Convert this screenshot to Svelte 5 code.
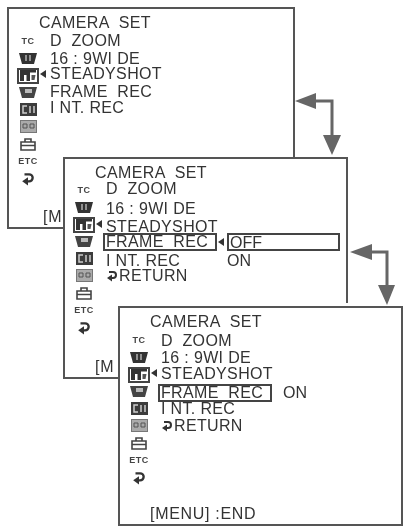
<script lang="ts">
	const panels = [
		{
			cls: 'p1',
			title: 'CAMERA  SET',
			gaps: [2, 6, 3, 6, 4],
			rows: [
				{ t: 'D  ZOOM' },
				{ t: '16 : 9WI DE' },
				{ t: 'STEADYSHOT' },
				{ t: 'FRAME  REC' },
				{ t: 'I NT. REC' }
			],
			footer: '[M'
		},
		{
			cls: 'p2',
			title: 'CAMERA  SET',
			gaps: [0, 8, 6, 0, 4, 3],
			rows: [
				{ t: 'D  ZOOM' },
				{ t: '16 : 9WI DE' },
				{ t: 'STEADYSHOT' },
				{ t: 'FRAME  REC', boxed: true },
				{ t: 'I NT. REC' },
				{ t: 'RETURN', ret: true }
			],
			footer: '[M'
		},
		{
			cls: 'p3',
			title: 'CAMERA  SET',
			gaps: [3, 5, 4, 4, 1, 5],
			rows: [
				{ t: 'D  ZOOM' },
				{ t: '16 : 9WI DE' },
				{ t: 'STEADYSHOT' },
				{ t: 'FRAME  REC', boxed: true },
				{ t: 'I NT. REC' },
				{ t: 'RETURN', ret: true }
			],
			footer: '[MENU] :END'
		}
	];
</script>

{#snippet ret(w)}
	<svg class="ret" width={w} height={w} viewBox="0 0 12 12">
		<path d="M3 2h4a3 3 0 0 1 0 6H5" fill="none" stroke="#333" stroke-width="2" />
		<path d="M6 4.5L1 8L6 11.5Z" fill="#333" />
	</svg>
{/snippet}

{#snippet icons()}
	<div class="icons">
		<span class="ic txt">TC</span>
		<svg class="ic" width="18" height="13" viewBox="0 0 18 13"><path d="M0 1h18l-3 11H3Z" fill="#333" /><path d="M7 3v6M11 3v6" stroke="#aaa" stroke-width="1.6" /></svg>
		<span class="sel">
			<svg width="16" height="11" viewBox="0 0 16 11"><path d="M0 0h16v2.5H10V11H6.500V5H4v6H0Z" fill="#333" /><path d="M11.500 5h4l-1 5h-3Z" fill="#555" /></svg>
		</span>
		<svg class="ic" width="18" height="13" viewBox="0 0 18 13"><path d="M0 1h18l-3 11H3Z" fill="#444" /><rect x="6" y="3" width="7" height="4" fill="#bbb" /></svg>
		<svg class="ic" width="17" height="13" viewBox="0 0 17 13"><rect width="17" height="13" fill="#3c3c3c" /><path d="M7 3H3v7h4M10 3v7M14 3v7" fill="none" stroke="#ccc" stroke-width="1.5" /></svg>
		<svg class="ic" width="17" height="13" viewBox="0 0 17 13"><rect x=".5" y=".5" width="16" height="12" fill="#aaa" stroke="#777" /><path d="M3 4h4v4H3ZM10 4h4v4h-4Z" fill="none" stroke="#555" /></svg>
		<svg class="ic" width="16" height="13" viewBox="0 0 16 13"><path d="M1 4h14v8H1ZM5 4V1h6v3M1 7.500h14" fill="none" stroke="#444" stroke-width="1.6" /></svg>
		<span class="ic txt">ETC</span>
		<span class="ic">{@render ret(14)}</span>
	</div>
{/snippet}

{#each panels as p}
	<section class="panel {p.cls}">
		<h2>{p.title}</h2>
		<div class="body">
			{@render icons()}
			<ul>
				{#each p.rows as r, i}
					<li class:boxed={r.boxed} style="margin-top:{p.gaps[i]}px">
						{#if r.ret}{@render ret(12)}{/if}{r.t}
					</li>
				{/each}
			</ul>
		</div>
		<p class="foot">{p.footer}</p>
		{#if p.cls === 'p2'}
			<div class="opts"><span class="off">OFF</span><span>ON</span></div>
		{/if}
		{#if p.cls === 'p3'}
			<span class="on">ON</span>
		{/if}
		<i class="tri t-main"></i>
		{#if p.cls === 'p2'}<i class="tri t-sub"></i>{/if}
	</section>
{/each}

<svg class="link a1" width="48" height="66" viewBox="0 0 48 66">
	<path d="M18 10H38V50" fill="none" stroke="#666" stroke-width="3" />
	<path d="M1 10L22 2V18ZM29 44H47L38 64Z" fill="#666" />
</svg>
<svg class="link a2" width="48" height="66" viewBox="0 0 48 66">
	<path d="M18 10H39V50" fill="none" stroke="#666" stroke-width="3" />
	<path d="M2 10L24 2V18ZM30 43H47L39 63Z" fill="#666" />
</svg>

<style>
	:global(body) {
		background: #fff;
		margin: 0;
	}
	:global(#app) {
		position: relative;
		width: 404px;
		height: 526px;
		overflow: hidden;
		font-family: 'Liberation Sans', Arial, sans-serif;
		color: #333;
	}
	.panel {
		position: absolute;
		box-sizing: border-box;
		border: 2px solid #555;
		background: #fff;
		filter: blur(0.3px);
	}
	.p1 {
		left: 7px;
		top: 7px;
		width: 288px;
		height: 222px;
	}
	.p2 {
		left: 63px;
		top: 157px;
		width: 285px;
		height: 222px;
	}
	.p3 {
		left: 118px;
		top: 306px;
		width: 285px;
		height: 220px;
		box-shadow: 0 -3px 0 #fff;
	}
	h2 {
		margin: 0;
		font-weight: 400;
		font-size: 16px;
		line-height: 14px;
		letter-spacing: 0.4px;
		white-space: pre;
		position: absolute;
		left: 30px;
		top: 7px;
	}
	.body {
		display: flex;
		padding: 24px 0 0 8px;
		gap: 11px;
	}
	.icons {
		display: flex;
		flex-direction: column;
		align-items: center;
		width: 22px;
		margin-top: 2px;
		gap: 4.25px;
	}
	.p2 .icons {
		margin-top: 1px;
	}
	.ic {
		display: block;
		height: 13px;
		line-height: 13px;
	}
	.txt {
		font-size: 9px;
		font-weight: 700;
		font-family: 'Liberation Sans', sans-serif;
		letter-spacing: 0.5px;
		color: #444;
	}
	.sel {
		display: flex;
		align-items: center;
		justify-content: center;
		box-sizing: border-box;
		width: 22px;
		height: 16px;
		margin: -2px 0;
		border: 2px solid #444;
	}
	ul {
		list-style: none;
		margin: 0;
		padding: 0;
		font-size: 16px;
		line-height: 12px;
		letter-spacing: 0.35px;
		white-space: pre;
	}
	li {
		height: 12px;
	}
	.boxed {
		box-sizing: border-box;
		width: 114px;
		height: 18px;
		margin-left: -3px;
		padding-left: 1px;
		line-height: 14px;
		border: 2px solid #444;
	}
	.ret {
		margin-right: 1px;
		vertical-align: -1px;
	}
	.foot {
		position: absolute;
		left: 30px;
		bottom: 3px;
		margin: 0;
		font-size: 16px;
		line-height: 14px;
		letter-spacing: 0.7px;
	}
	.p1 .foot {
		left: 34px;
	}
	.opts {
		position: absolute;
		left: 162px;
		top: 74px;
		width: 113px;
		display: flex;
		flex-direction: column;
		font-size: 16px;
		line-height: 15px;
		gap: 2px;
	}
	.off {
		box-sizing: border-box;
		height: 18px;
		border: 2px solid #444;
		padding-left: 1px;
	}
	.on {
		position: absolute;
		left: 163px;
		top: 78px;
		font-size: 16px;
		line-height: 14px;
	}
	.tri {
		position: absolute;
		width: 0;
		height: 0;
		border-style: solid;
		border-width: 4px 6px 4px 0;
		border-color: transparent #333 transparent transparent;
		left: 31px;
		top: 61px;
	}
	.p2 .t-main {
		top: 61px;
	}
	.p2 .t-sub {
		left: 153px;
		top: 79px;
	}
	.link {
		position: absolute;
	}
	.a1 {
		left: 294px;
		top: 91px;
	}
	.a2 {
		left: 348px;
		top: 242px;
	}
</style>
